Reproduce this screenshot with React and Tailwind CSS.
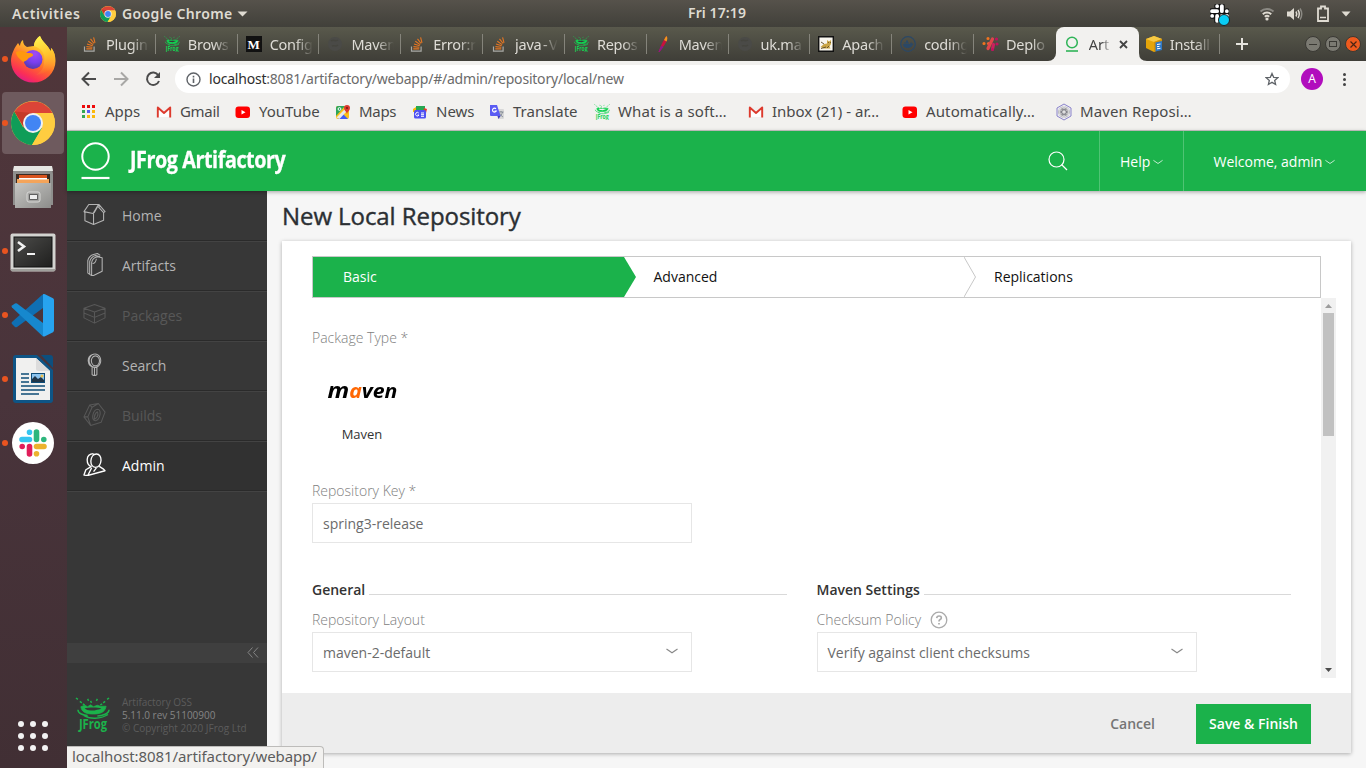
import React from "react";

/* ---------- small icons ---------- */
const StackOverflow = () => (
  <svg width="16" height="16" viewBox="0 0 16 16" fill="none">
    <path d="M2.500 10.500v4.600h9.600v-4.600" stroke="#a9a9a5" strokeWidth="1.200" />
    <path d="M4.300 12.900h6M4.400 10.600l6 .7M5 8l5.700 1.800M6.300 5.200l4.900 3.400M8.500 2.800l3.600 4.700M11.600 1.300l1.400 5.600" stroke="#e87722" strokeWidth="1.100" />
  </svg>
);
const Frog = ({ w = 16, h = 16, color = "#12d352", gap = "#373737" }) => (
  <svg width={w} height={h} viewBox="0 0 36 36" fill="none" stroke={color}>
    <path d="M1 1l2 1.500m2 2l2 1.500m1 1l2 1M35 1l-2 1.500m-2 2l-2 1.500m-1 1l-2 1M13 2l1 2M23 2l-1 2M16 4l1 2" strokeWidth="1.500" />
    <path d="M6 10l4-1.500 3 1.500 3-2 3 2 4-1.500 3 1 6 0c-1 5-4 8-13 8S7 15 6 10z" fill={color} strokeWidth=".8" />
    <path d="M10 11.500c3-1 14-1 17 0-1 1.500-4 1-6 2s-5 0-7 0-3-1-4-2z" fill={gap} stroke="none" />
    <path d="M3 13c0 4 6 6 10 6M35 13c0 4-7 6.500-12 6.500M9 19c6 4 17 4 25-1" strokeWidth="1.500" />
    <text x="4" y="33" fontSize="15" fontWeight="700" stroke="none" fill={color} textLength="29" lengthAdjust="spacingAndGlyphs" fontFamily="Open Sans, sans-serif">JFrog</text>
  </svg>
);
const Medium = () => (
  <span className="flex h-4 w-4 items-center justify-center bg-[#111] font-['Liberation_Serif',serif] text-[13px] leading-none font-bold text-white">M</span>
);
const Globe = () => (
  <svg width="16" height="16" viewBox="0 0 16 16"><circle cx="8" cy="8" r="7" fill="#4a4a47" /><path d="M4 5c3-2 4 1 7-1M5 10c3-1 4 1 6-1" stroke="#45453f" strokeWidth="1.500" fill="none" /></svg>
);
const Feather = () => (
  <svg width="16" height="16" viewBox="0 0 16 16"><path d="M11.500 0c1.500 2 .5 5-2 9l-3 4-2 3H3.500l2-5c1.500-4 3.500-8 6-11z" fill="#c8123c" /><path d="M11.500 0c1.200 1.500 1 3.500 0 5.500L9 4c.8-1.500 1.500-3 2.500-4z" fill="#f0961c" /><path d="M6 9.500l2.500 1.500-2 2.500-2 2.500h-1z" fill="#8b1a86" /></svg>
);
const Tomcat = () => (
  <svg width="16" height="16" viewBox="0 0 16 16"><path d="M.7.700h14.600v14.600H.7z" fill="#f8f6ee" stroke="#111" strokeWidth="1.400" /><path d="M2.500 11l3.500-3 3-.5V4l2 1.500L13 4v4l-1.500 2.500 1 2H6z" fill="#c9a545" /><path d="M3 6l3 2M3 12.500l5-1.500M10 6.500h.8M12 6.500h.8M9 12l2-2" stroke="#5b4a22" strokeWidth=".9" /></svg>
);
const DockerIcon = () => (
  <svg width="16" height="16" viewBox="0 0 16 16"><circle cx="8" cy="8" r="7.300" fill="none" stroke="#2b4866" strokeWidth="1.200" /><path d="M3 8h7l1-2 1 1.500 1.500.2C12 11 10 12 7.500 12S3.500 11 3 8zM4 6.500h5v1H4zM6 4.500h2v2H6z" fill="#2b4866" /></svg>
);
const Dots = () => (
  <svg width="17" height="16" viewBox="0 0 17 16" strokeLinecap="round" strokeWidth="3.200" fill="none"><path d="M2 7.500h0M6 2.500h0" stroke="#f2731f" /><path d="M6.500 7.500h0" stroke="#ee6432" /><path d="M10.500 3L6 12.500" stroke="#e0454a" /><path d="M11.500 8.500L10.500 13" stroke="#c9225e" /><path d="M14.500 3h0M15 8h0M10.500 13.500h0" stroke="#c0115e" /></svg>
);
const Ring = () => (
  <svg width="14" height="16" viewBox="0 0 14 16" fill="none" stroke="#2fb457"><circle cx="7" cy="6.500" r="5.300" strokeWidth="1.500" /><path d="M1 15h12" strokeWidth="1.600" /></svg>
);
const Box = () => (
  <svg width="17" height="16" viewBox="0 0 17 16"><path d="M8 0l8 3v9l-8 4-8-4V3z" fill="#e5a50a" /><path d="M0 3l8 3 8-3-8-3z" fill="#f6c944" /><path d="M8 6v10l8-4V3z" fill="#d69207" /><path d="M9.500 6.500l6.500-1.500v9l-6.500 1.500z" fill="#2f78c4" /><path d="M11 8.500l3.500-.5M11 10.700l2.500-.3M11 12.800l3.500-.5" stroke="#fff" /></svg>
);
const GmailIcon = () => (
  <svg width="16" height="16" viewBox="0 0 16 16"><path d="M1.500 3h13v10.500h-13z" fill="#f1efee" /><path d="M3 13V4.500l5 4.500 5-4.500V13" fill="#fdfdfd" /><path d="M1.800 13.500V3.500L8 9l6.200-5.500v10" fill="none" stroke="#dd3a2d" strokeWidth="1.900" strokeLinejoin="round" /></svg>
);
const YouTube = () => (
  <svg width="16" height="16" viewBox="0 0 16 16"><rect x=".5" y="2.500" width="14.500" height="11.500" rx="3" fill="#f00" /><path d="M6.500 6v4.500l4-2.200z" fill="#fff" /></svg>
);
const MapsIcon = () => (
  <svg width="16" height="16" viewBox="0 0 16 16"><rect x="1" y="2" width="13" height="13" rx="2" fill="#fbc117" /><path d="M1 4q0-2 2-2h7L1 12z" fill="#2fa65b" /><path d="M3 15l5-5 5 5z" fill="#3f5cf5" /><path d="M1.500 13.500l9-9 2 2-8 8.500z" fill="#e9e9e9" /><circle cx="4.500" cy="5" r="1.400" fill="none" stroke="#fff" /><path d="M12 1a3 3 0 0 1 3 3c0 2.500-2.500 3.500-3 6-.5-2.500-3-3.500-3-6a3 3 0 0 1 3-3z" fill="#dc3a2e" /><circle cx="12" cy="4" r="1.100" fill="#7e1c14" /></svg>
);
const NewsIcon = () => (
  <svg width="16" height="16" viewBox="0 0 16 16"><path d="M4 2h9v4H4z" fill="#28a852" /><path d="M1 5l3-2v5H1z" fill="#fbbc04" /><path d="M12 4l3 1-1 4h-3z" fill="#e6392d" /><rect x="2" y="6" width="12" height="8.500" rx="1.500" fill="#4f51f3" /><path d="M6.700 9A1.800 1.800 0 1 0 7 11H5.500M9 9h3M9 10.700h3M9 12.300h3" stroke="#fff" fill="none" /></svg>
);
const TranslateIcon = () => (
  <svg width="16" height="16" viewBox="0 0 16 16"><path d="M7 5h7q1 0 1 1v8q0 1-1 1H9z" fill="#d8d8d8" /><path d="M9.500 8h5M12 7v1M10 13c2-1 3-3 3.500-5M10.500 9c1 2 2 3 3.500 4" stroke="#77808c" strokeWidth=".8" fill="none" /><path d="M1 1h7l3.500 11H2q-1 0-1-1z" fill="#5a5cf3" /><path d="M8.500 12h3l-2 3z" fill="#3d3fc0" /><path d="M7 4.800A2 2 0 1 0 7.300 7H5.500" stroke="#fff" fill="none" strokeWidth="1.100" /></svg>
);
const Hex = () => (
  <svg width="18" height="18" viewBox="0 0 18 18" fill="none"><path d="M9 1l7 4v8l-7 4-7-4V5z" stroke="#8a83c9" fill="#ecebf3" /><circle cx="9" cy="9" r="5.800" fill="#a4a4a8" /><path d="M9 3.500l4.700 2.700v5.500L9 14.400l-4.700-2.700V6.200zM9 3.500v11M4.300 6.200l9.400 5.500M13.700 6.200l-9.400 5.500" stroke="#eee" strokeWidth=".8" /><circle cx="9" cy="9" r="2.500" stroke="#6f6f78" strokeWidth=".8" /></svg>
);
const AppsIcon = () => {
  const c = ["#f00a0a", "#e00a0a", "#f00a0a", "#35a853", "#5a5cf3", "#fbb90b", "#35a853", "#fbb90b", "#fbb90b"];
  return (
    <svg width="16" height="16" viewBox="0 0 16 16">
      {c.map((f, i) => <rect key={i} x={2 + (i % 3) * 5} y={1 + Math.floor(i / 3) * 5} width="3" height="3" fill={f} />)}
    </svg>
  );
};
const ChromeLogo = ({ size }) => (
  <svg width={size} height={size} viewBox="0 0 44 44">
    <circle cx="22" cy="22" r="22" fill="#ffcd40" />
    <path d="M22 22L3.500 10.500A22 22 0 0 1 41.400 12z" fill="#db4437" />
    <path d="M3.300 10.500A22 22 0 0 0 21 44L31 27 22 22 12 26z" fill="#0f9d58" />
    <path d="M22 12h19.400A22 22 0 0 1 21 44l10-17z" fill="#ffcd40" />
    <path d="M3.300 10.500L13 27 22 12z" fill="#c53929" />
    <circle cx="22" cy="22" r="10" fill="#f1f1f1" />
    <circle cx="22" cy="22" r="8" fill="#4285f4" />
  </svg>
);
const SlackMark = ({ size, colors, stroke = 0 }) => (
  <svg width={size} height={size} viewBox="0 0 28 28" strokeLinecap="round" fill="none">
    {stroke > 0 && <path d="M3 10.500h7.500M10.500 3.200h0M17.500 3v7.500M24.800 10.500h0M25 17.500h-7.500M17.500 24.800h0M10.500 25v-7.500M3.200 17.500h0" stroke="#111" strokeWidth="8.500" />}
    <path d="M3 10.500h7.500M10.500 3.200h0" stroke={colors[0]} strokeWidth="5.600" />
    <path d="M17.500 3v7.500M24.800 10.500h0" stroke={colors[1]} strokeWidth="5.600" />
    <path d="M25 17.500h-7.500M17.500 24.800h0" stroke={colors[2]} strokeWidth="5.600" />
    <path d="M10.500 25v-7.500M3.200 17.500h0" stroke={colors[3]} strokeWidth="5.600" />
  </svg>
);

/* ---------- dock ---------- */
const Firefox = () => (
  <svg width="46" height="48" viewBox="0 0 46 48">
    <defs>
      <linearGradient id="ff1" x1=".8" y1="0" x2=".3" y2="1"><stop offset="0" stopColor="#fff44f" /><stop offset=".3" stopColor="#ffc02d" /><stop offset=".6" stopColor="#ff6a2b" /><stop offset=".85" stopColor="#fb2f56" /><stop offset="1" stopColor="#e01b8a" /></linearGradient>
      <linearGradient id="ff3" x1=".3" y1="0" x2=".5" y2="1"><stop offset="0" stopColor="#fff44f" /><stop offset=".5" stopColor="#ffc52e" /><stop offset="1" stopColor="#ff8a2b" stopOpacity="0" /></linearGradient>
      <radialGradient id="ff2" cx=".6" cy=".2" r=".9"><stop offset="0" stopColor="#a14bf5" /><stop offset=".5" stopColor="#7a3ff0" /><stop offset="1" stopColor="#4a3a9c" /></radialGradient>
    </defs>
    <path d="M30 1c-3 2-6 6-6 10-3 0-5 1-7 1-2-1-4-3-4-7-2 1-3 4-3 6l-2-3c-3 4-7 11-7 18a22.200 21.500 0 0 0 44.500 0c0-6-2-11-4.500-13 0 2 0 3-.5 3C38 10 32 7 30 1z" fill="url(#ff1)" />
    <path d="M30 1c-3 2-6 6-6 10 7 2 12 8 10 16 0 6-3 10-8 13 12-1 19-9 19-18 0-3-2-7-4-9 0 2 0 3-.5 3C38 10 32 7 30 1z" fill="url(#ff3)" />
    <circle cx="23" cy="24.500" r="9.500" fill="url(#ff2)" />
    <path d="M6 17c4-2 9-1 11 1 3 0 6 0 6 2 0 2-4 2-5 4-2 2-3 2-5 3-3-3-7-6-7-10z" fill="#ff980e" />
  </svg>
);
const Files = () => (
  <svg width="44" height="46" viewBox="0 0 44 46">
    <defs><linearGradient id="fi" x1="0" y1="0" x2="1" y2="1"><stop offset="0" stopColor="#c6c6c3" /><stop offset="1" stopColor="#8d8d8b" /></linearGradient></defs>
    <path d="M3 2h38l1 8v31h-2v3H4v-3H2V8z" fill="#8f8f8d" /><path d="M3 2h38l1 5H2z" fill="#e6e6e3" />
    <path d="M5 10h34v11H5z" fill="#3a2a22" /><path d="M8 11h28v8H8z" fill="#d9541e" /><path d="M6 15h32v5H6z" fill="#f4a45a" /><path d="M8 14h28v1.500H8z" fill="#fff" />
    <path d="M4 19h36v25H4z" fill="url(#fi)" /><rect x="16" y="28" width="13" height="10" rx="2" fill="#a3a3a1" stroke="#d8d8d6" /><path d="M18.500 30.500h8v5h-8z" fill="#eee" stroke="#444" strokeWidth=".8" />
  </svg>
);
const Terminal = () => (
  <svg className="mt-1" width="46" height="40" viewBox="0 0 46 40">
    <defs><linearGradient id="tm" x1="0" y1="0" x2="1" y2="1"><stop offset="0" stopColor="#4c4c4a" /><stop offset="1" stopColor="#1f1f1e" /></linearGradient></defs>
    <rect x=".5" y=".5" width="45" height="38" rx="2" fill="#d3d3d0" /><path d="M1 36h44v2H1z" fill="#a0a09c" /><rect x="4" y="4" width="38" height="30" fill="url(#tm)" stroke="#111" />
    <path d="M8 9l6 4.500L8 18" stroke="#f2f2f2" strokeWidth="2.600" fill="none" /><path d="M17 21h8" stroke="#f2f2f2" strokeWidth="2" />
  </svg>
);
const VSCode = () => (
  <svg width="44" height="44" viewBox="0 0 44 44">
    <path d="M33 1l-1 14L6 34q-1 .6-2 0l-3-3q-1-1 0-2L31 2z" fill="#0f6fb3" />
    <path d="M1 14.500q-1-1 0-2l3-2q1-.6 2 0l28 21-2 12z" fill="#1688ce" />
    <path d="M32 1.200q1-.6 2 0l8 4q1 .6 1 2v30q0 1-1 2l-8 4q-1 .6-2 0z" fill="#27a3ef" />
  </svg>
);
const Writer = () => (
  <svg width="40" height="48" viewBox="0 0 40 48">
    <path d="M3 0h21l16 15v30q0 3-3 3H3q-3 0-3-3V3q0-3 3-3z" fill="#0e5586" /><path d="M28 0h9q3 0 3 3v10z" fill="#0d4f7e" />
    <path d="M3 3h20l14 13v29H3z" fill="#f0f0ef" /><path d="M23 3l14 13H25q-2 0-2-2z" fill="#dcdcdc" />
    <path d="M8 19h8M8 23h8M8 27h8M8 31h24M8 35h24M8 39h18" stroke="#0e4c77" strokeWidth="1.700" /><rect x="18.500" y="18.500" width="13" height="9" fill="#8cc4ef" stroke="#0e4c77" /><path d="M19 27v-3l3-3 3 3 3-2 3 3v2z" fill="#213648" /><circle cx="29" cy="21" r="1.500" fill="#eec14d" />
  </svg>
);

const dock = [
  { icon: <Firefox />, dot: true },
  { icon: <ChromeLogo size={44} />, dot: true, active: true },
  { icon: <Files /> },
  { icon: <Terminal />, dot: true },
  { icon: <VSCode />, dot: true },
  { icon: <Writer />, dot: true },
  { icon: <span className="flex h-[42px] w-[42px] items-center justify-center rounded-full bg-white"><SlackMark size={28} colors={["#36c5f0", "#2eb67d", "#ecb22e", "#e01e5a"]} /></span>, dot: true },
];

function Dock() {
  return (
    <aside className="flex w-[67px] shrink-0 flex-col bg-linear-to-b from-[#50363a] via-[#49343b] to-[#412f34]">
      {dock.map((d, i) => (
        <div key={i} className="flex h-16 items-center">
          <div className={"ml-0.5 flex h-[62px] w-[62px] items-center rounded-[4px] " + (d.active ? "bg-[#6e5a5e]" : "")}>
            <span className={"h-1.5 w-1.5 rounded-full " + (d.dot ? "bg-[#e95420]" : "")} />
            <span className="flex flex-1 justify-center pr-1.5">{d.icon}</span>
          </div>
        </div>
      ))}
      <div className="mt-auto mb-[17px] ml-[18px] grid w-[30px] grid-cols-3 gap-[6px]">
        {Array.from({ length: 9 }, (_, i) => <span key={i} className="h-1.5 w-1.5 rounded-full bg-[#f2f2f2]" />)}
      </div>
    </aside>
  );
}

/* ---------- desktop bar ---------- */
function TopBar() {
  return (
    <header className="flex h-[27px] items-center bg-linear-to-b from-[#56524b] to-[#41403a] text-[14px] font-semibold text-[#dfdbd2]">
      <div className="flex w-[688px] items-center pl-3">
        <span className="w-[68px] tracking-[0.600px]">Activities</span>
        <span className="ml-5"><ChromeLogo size={16} /></span>
        <span className="ml-[6px] w-[112px] whitespace-nowrap tracking-[0.360px]">Google Chrome</span>
        <svg className="ml-[3px]" width="11" height="6" viewBox="0 0 11 6"><path d="M.5.500h10L5.500 5.500z" fill="#dfdbd2" /></svg>
      </div>
      <div className="-mt-0.5 tracking-[0.100px]">Fri 17:19</div>
      <div className="ml-auto flex items-center pr-[15px]">
        <span className="relative mr-[29px] flex h-5 w-5 items-center">
          <SlackMark size={19} stroke={1} colors={["#fff", "#fff", "#fff", "#fff"]} />
          <span className="absolute right-0 bottom-[-2px] h-[12px] w-[12px] rounded-full border border-[#222] bg-[#09cdf5]" />
        </span>
        <svg width="16" height="14" viewBox="0 0 16 14" fill="none" strokeWidth="1.900"><path d="M1.500 4.500a9.500 9.500 0 0 1 13 0" stroke="#8b8983" /><path d="M3.800 7.200a6 6 0 0 1 8.400 0M5.800 9.800a3.200 3.200 0 0 1 4.400 0" stroke="#dfdbd2" /><circle cx="8" cy="12" r="1.600" fill="#dfdbd2" /></svg>
        <svg className="ml-3" width="16" height="14" viewBox="0 0 16 14" fill="none"><path d="M0 4.500h3L7 1v12L3 9.500H0z" fill="#dfdbd2" /><path d="M9 4.500q1.500 2.500 0 5M11 3q2.500 4 0 8" stroke="#dfdbd2" strokeWidth="1.500" /><path d="M13 1.500q3.500 5.500 0 11" stroke="#8b8983" strokeWidth="1.500" /></svg>
        <svg className="ml-[14px]" width="12" height="17" viewBox="0 0 12 17" fill="none"><path d="M1 3.500h3v-2h4v2h3V16H1z" stroke="#dfdbd2" strokeWidth="1.800" /><path d="M3 12.500h6" stroke="#dfdbd2" strokeWidth="1.500" /></svg>
        <svg className="ml-3" width="10" height="6" viewBox="0 0 10 6"><path d="M.5.500h9L5 5.500z" fill="#dfdbd2" /></svg>
      </div>
    </header>
  );
}

/* ---------- browser chrome ---------- */
const tabs = [
  [<StackOverflow />, "Plugin"], [<Frog />, "Brows"], [<Medium />, "Config"], [<Globe />, "Maven"],
  [<StackOverflow />, "Error:r"], [<StackOverflow />, "java - V"], [<Frog />, "Repos"], [<Feather />, "Maven"],
  [<Globe />, "uk.ma"], [<Tomcat />, "Apach"], [<DockerIcon />, "coding"], [<Dots />, "Deplo"],
];

function Tab({ icon, label, last }) {
  return (
    <div className={"flex h-[34px] w-[81.820px] shrink-0 items-center " + (last ? "bg-linear-to-b from-[#59594c] to-[#3f3e38] rounded-br-[8px]" : "")}>
      <span className="ml-2 w-4 shrink-0">{icon}</span>
      <span className="ml-2 w-[43px] overflow-hidden mask-r-from-60% text-[14.500px] leading-[26px] tracking-[-0.250px] whitespace-nowrap text-[#dedcd6] [word-spacing:-2px]">{label}</span>
      {!last && <span className="ml-auto h-5 w-px bg-[#85847b]" />}
    </div>
  );
}

function TabStrip() {
  const btn = "flex h-4 w-4 items-center justify-center rounded-full border border-[#3a3934]";
  return (
    <div className="flex h-[34px] items-center bg-linear-to-b from-[#59594c] to-[#3f3e38] pl-[7px]">
      {tabs.slice(0, 11).map(([icon, label], i) => <Tab key={i} icon={icon} label={label} />)}
      <div className="flex bg-[#f2f1ef]">
        <Tab icon={tabs[11][0]} label={tabs[11][1]} last />
      </div>
      <div className="flex h-[34px] w-[83px] shrink-0 items-center rounded-t-[8px] bg-[#f2f1ef]">
        <span className="ml-[9px]"><Ring /></span>
        <span className="ml-[10px] w-[22px] overflow-hidden mask-r-from-60% text-[14.500px] leading-[26px] text-[#444]">Art</span>
        <svg className="ml-[8px]" width="9" height="9" viewBox="0 0 9 9"><path d="M1 1l7 7M8 1L1 8" stroke="#444" strokeWidth="1.800" /></svg>
      </div>
      <svg className="-mr-[9px] self-end" width="8" height="8" viewBox="0 0 8 8"><path d="M0 0v8h8q-8 0-8-8z" fill="#f2f1ef" /></svg>
      <Tab icon={<Box />} label="Install" />
      <svg className="ml-[15px]" width="14" height="14" viewBox="0 0 14 14"><path d="M7 1v12M1 7h12" stroke="#e6e4de" strokeWidth="2" /></svg>
      <div className="mr-[5px] ml-auto flex gap-1">
        <span className={btn + " bg-[#7b7a72]"}><span className="h-px w-2 bg-[#3a3934]" /></span>
        <span className={btn + " bg-[#7b7a72]"}><span className="h-1.5 w-2 border border-[#3a3934]" /></span>
        <span className={btn + " bg-[#ee5a1e]"}><svg width="7" height="7" viewBox="0 0 7 7"><path d="M.5.500l6 6M6.500.500l-6 6" stroke="#4a2413" strokeWidth="1.200" /></svg></span>
      </div>
    </div>
  );
}

function Toolbar() {
  return (
    <div className="flex h-9 items-center bg-[#f2f1ef] pr-[17px] pl-[14px]">
      <svg width="16" height="16" viewBox="0 0 16 16" fill="none" stroke="#4b4b4b" strokeWidth="2"><path d="M15 8H2M8 1.500L1.500 8 8 14.500" /></svg>
      <svg className="ml-4" width="16" height="16" viewBox="0 0 16 16" fill="none" stroke="#a8a7a5" strokeWidth="2"><path d="M1 8h13M8 1.500L14.500 8 8 14.500" /></svg>
      <svg className="ml-4" width="16" height="16" viewBox="0 0 16 16" fill="none"><path d="M13.300 4.200A6.200 6.200 0 1 0 14 10" stroke="#4b4b4b" strokeWidth="2" /><path d="M15 1v6H9z" fill="#4b4b4b" /></svg>
      <div className="ml-[14px] flex h-7 w-[1115px] items-center rounded-full bg-white pl-[11px] text-[14px] text-[#6b6b6b]">
        <svg width="15" height="15" viewBox="0 0 15 15" fill="none" stroke="#5f6368"><circle cx="7.500" cy="7.500" r="6.500" strokeWidth="1.400" /><path d="M7.500 6.500v4.500M7.500 3.800v1.600" strokeWidth="1.600" /></svg>
        <span className="-mt-0.5 ml-2 tracking-[-0.210px]"><span className="text-[#2e2e2e]">localhost</span>:8081/artifactory/webapp/#/admin/repository/local/new</span>
        <svg className="mr-[11px] ml-auto" width="14" height="14" viewBox="0 0 24 24" fill="none" stroke="#5f6368" strokeWidth="2.200"><path d="M12 2.500l2.900 6.600 7.100.6-5.400 4.700 1.600 7L12 17.700l-6.200 3.700 1.600-7L2 9.700l7.100-.6z" /></svg>
      </div>
      <span className="ml-[11px] flex h-[22px] w-[22px] items-center justify-center rounded-full bg-[#b10dbd] text-[12px] text-white">A</span>
      <span className="ml-auto mr-[3px] flex flex-col gap-0.5">
        {[0, 1, 2].map((i) => <span key={i} className="h-[3px] w-[3px] rounded-full bg-[#444]" />)}
      </span>
    </div>
  );
}

const marks = [
  [<AppsIcon />, "Apps", "w-[76px]"], [<GmailIcon />, "Gmail", "w-[79px]"], [<YouTube />, "YouTube", "w-[100px]"],
  [<MapsIcon />, "Maps", "w-[77px]"], [<NewsIcon />, "News", "w-[77px]"], [<TranslateIcon />, "Translate", "w-[105px]"],
  [<Frog gap="#f2f1ef" />, "What is a soft…", "w-[154px]"], [<GmailIcon />, "Inbox (21) - ar…", "w-[154px]"],
  [<YouTube />, "Automatically…", "w-[153px]"], [<Hex />, "Maven Reposi…", "w-[150px]"],
];

function Bookmarks() {
  return (
    <div className="flex h-[34px] items-center border-b border-[#c9c8c6] bg-[#f2f1ef] pb-[3px] pl-[13px] text-[15px] text-[#494949]">
      {marks.map(([icon, label, w], i) => (
        <span key={i} className={"flex shrink-0 items-center whitespace-nowrap " + w}>
          <span className={i === 0 || i === 9 ? "w-[25px]" : "w-[24px]"}>{icon}</span><span className={"-mt-0.5 " + (i === 1 || i === 3 ? "tracking-[-0.300px]" : i > 5 && i !== 7 ? "tracking-[0.120px]" : "tracking-[0px]")}>{label}</span>
        </span>
      ))}
    </div>
  );
}

/* ---------- web app ---------- */
const nav = [
  { label: "Home", d: "M1 9l5-7.500h10.500l6.500 7.500-1.500 1v8L11 22.500l-9-4V10L1 9l9.500 2L15 3.500M11 11v11.500M15.500 3.500l6 6.500M11.500 10.500l4-7M16.500 1.500l-1.500 2M18 3.500l-1.500 1" },
  { label: "Artifacts", d: "M9 23.500V10q1-5 6-6l5 1v14l-9 4.500zM7 22.500V9q1-5 6-6.500l5 1.500M5 21V8q1-5 6-6.500l4-1 3 2M5 21l4 2.500M10 11q3 0 4-5" },
  { label: "Packages", d: "M1 5.500l11-4 11 4-11 4zM1 5.500v10l11 5.500 11-5.500v-10M12 9.500V21M1 10.500l11 4.500 11-4.500", off: true },
  { label: "Search", d: "M12.500 1a6 7 0 1 1-.1 0M13 3a4.200 5.200 0 1 1-.1 0M9.500 14.500v8q2.500 2 5 0v-8M12 15v8M10 1.500q-5 2-4.500 7t5 6" },
  { label: "Builds", d: "M7 2l9-1.500 7 9-4 10.500-11 3.500-7-9zM7 2l2.500 2.500L16 .5M9.500 4.500L5 14.500l3 9M5 14.500l-4 0M15 6.500c5 0 3 11-2 12-5 0-3-11 2-12M15 9q-4 3-3 8M15 9q2 5-3 8", off: true },
  { label: "Admin", d: "M14 1c7 0 6 14-1 14S7 1 14 1M11 .7C2 1 3 12 9 14.500M8 14.500l-5 3-2 5.500 4 .5 18-5-2-2-4-2.500M9 15.500l-4 8M14 15.500l-3 4", active: true },
];

function Sidebar() {
  return (
    <nav className="flex w-[200px] shrink-0 flex-col bg-[#373737]">
      {nav.map((n) => (
        <div key={n.label} className={"flex h-[50px] items-center border-b border-b-[#2a2a2a] border-t pb-0 pl-4 text-[14px] " + (n.label === "Home" ? "border-t-[#373737] " : "border-t-[#434343] ") + (n.active ? "bg-[#313131] text-white" : n.off ? "text-[#585858]" : "text-[#b4b4b4]")}>
          <svg className="-mt-1" width="23" height="23" viewBox="0 0 24 24" fill="none" stroke="currentColor" strokeWidth={n.active ? "1.400" : "1.100"} strokeLinejoin="round"><path d={n.d} /></svg>
          <span className="-mt-0.5 ml-4">{n.label}</span>
        </div>
      ))}
      <div className="flex-1 border-t border-[#434343]" />
      <div className="flex h-5 items-center justify-end bg-[#3f3f3f] pr-2">
        <svg className="-mt-0.5" width="12" height="11" viewBox="0 0 12 11" fill="none" stroke="#858585"><path d="M5.500.500L1 5.500l4.500 5M11 .5L6.500 5.500l4.500 5" /></svg>
      </div>
      <div className="flex h-[105px] items-start pt-[33px] pl-2 text-[10px] leading-[13px] text-[#5c5c5c]">
        <Frog w={35} h={37} color="#1bb24b" />
        <div className="ml-3 tracking-[-0.020px] whitespace-nowrap">
          <div>Artifactory OSS</div>
          <div className="text-[#858585]">5.11.0 rev 51100900</div>
          <div>© Copyright 2020 JFrog Ltd</div>
        </div>
      </div>
    </nav>
  );
}

const Chevron = ({ className = "", w = 10 }) => (
  <svg className={className} width={w} height="6" viewBox="0 0 12 6" fill="none" stroke="currentColor" strokeWidth="1.100"><path d="M.5 1L6 4.800 11.500 1" /></svg>
);

function AppHeader() {
  return (
    <header className="relative z-10 flex h-[60px] shrink-0 items-center bg-[#1bb24b] text-[14px] text-white shadow-[0_1px_4px_rgba(0,0,0,0.35)]">
      <svg className="ml-[14px]" width="29" height="38" viewBox="0 0 29 38" fill="none" stroke="#fff"><circle cx="14.500" cy="14.500" r="13.200" strokeWidth="2" /><path d="M.5 36h28" strokeWidth="2.200" /></svg>
      <span className="-mt-1 ml-5 w-[160px] origin-left scale-x-[0.858] text-[23px] font-bold tracking-[-0.500px] whitespace-nowrap [-webkit-text-stroke:0.300px_#fff]">JFrog Artifactory</span>
      <svg className="ml-auto" width="20" height="20" viewBox="0 0 20 20" fill="none" stroke="#fff" strokeWidth="1.200"><circle cx="8.500" cy="8.500" r="7.500" /><path d="M13.500 13.500l5.500 5.500" /></svg>
      <div className="ml-[31px] flex h-full w-[84px] items-center border-l border-[#4fc474] pl-[20px]">Help<Chevron className="mt-0.5 ml-[3px] opacity-80" /></div>
      <div className="flex h-full w-[183px] items-center border-l border-[#4fc474] pl-[29.500px] whitespace-nowrap">Welcome, admin<Chevron className="mt-0.5 ml-[3px] opacity-80" /></div>
    </header>
  );
}

const Label = ({ children, className = "" }) => <div className={"flex h-5 items-center text-[14px] font-light text-[#808080] " + className}><span className="-mt-0.5">{children}</span></div>;
const Section = ({ children }) => (
  <div className="flex h-5 items-center text-[14px] font-semibold text-[#333]"><span className="-mt-0.5">{children}</span><span className="mt-[9px] ml-[4px] h-px flex-1 bg-[#d9d9d9]" /></div>
);
const Field = ({ children, select }) => (
  <div className="mt-0.5 flex h-10 w-[380px] items-center justify-between border border-[#e6e6e6] pr-[13px] pl-[10px] text-[14px] text-[#6b6b6b]">
    <span>{children}</span>
    {select && <Chevron w={12} className="-mt-[3px] opacity-80" />}
  </div>
);

function Form() {
  return (
    <div className="mx-[30px] mt-[15px] flex h-[422px] w-[1024px] flex-col">
      <div className="flex h-[42px] w-[1009px] items-center border border-[#c8c8c8] text-[14px] text-[#111]">
        <div className="flex h-10 w-[311px] items-center bg-[#1bb24b] pb-0.5 pl-[30px] text-white">Basic</div>
        <svg width="12" height="40" viewBox="0 0 12 40"><path d="M0 0l12 20L0 40z" fill="#1bb24b" /></svg>
        <div className="w-[328px] pb-0.5 pl-[17.500px]">Advanced</div>
        <svg width="12" height="40" viewBox="0 0 12 40" fill="none" stroke="#c8c8c8"><path d="M0 0l11.500 20L0 40" /></svg>
        <div className="pb-0.5 pl-[18px]">Replications</div>
      </div>
      <div className="flex h-[380px]">
        <div className="w-[1009px] pt-[30px] pr-[30px]">
          <Label>Package Type *</Label>
          <div className="mt-[31px] w-[100px] text-center">
            <div className="ml-px flex h-5 scale-x-[1.090] items-baseline justify-center text-[19.500px] leading-5 font-bold text-black italic">
              <span className="text-[22px]">m</span><span className="text-[#ff6804]">a</span><span>ven</span>
            </div>
            <div className="mt-[25px] h-5 text-[13px] leading-5 text-[#333]">Maven</div>
          </div>
          <Label className="mt-[37px]">Repository Key *</Label>
          <Field>spring3-release</Field>
          <div className="mt-[37px] grid grid-cols-2 gap-[30px]">
            <div>
              <Section>General</Section>
              <Label className="mt-[10px]">Repository Layout</Label>
              <Field select>maven-2-default</Field>
            </div>
            <div>
              <Section>Maven Settings</Section>
              <div className="mt-[10px] flex items-center">
                <Label>Checksum Policy</Label>
                <svg className="ml-[9px]" width="18" height="18" viewBox="0 0 18 18" fill="none" stroke="#aaa"><circle cx="9" cy="9" r="7.800" strokeWidth="1.300" /><path d="M6.700 7.200q.2-2.200 2.400-2.200t2.200 1.900q0 1-1.200 1.700T9 10.500M9 12v1.500" strokeWidth="1.700" /></svg>
              </div>
              <Field select>Verify against client checksums</Field>
            </div>
          </div>
        </div>
        <div className="flex w-[15px] flex-col items-center justify-between bg-[#f1f1f1] py-[6px]">
          <svg width="7" height="4" viewBox="0 0 7 4"><path d="M0 4h7L3.500 0z" fill="#9d9d9d" /></svg>
          <div className="mt-[5px] mb-auto h-[123px] w-[11px] bg-[#c1c1c1]" />
          <svg width="7" height="4" viewBox="0 0 7 4"><path d="M0 0h7L3.500 4z" fill="#4c4c4c" /></svg>
        </div>
      </div>
    </div>
  );
}

export default function App() {
  return (
    <div className="relative flex h-screen w-[1366px] flex-col overflow-hidden font-['Noto_Sans',sans-serif]">
      <TopBar />
      <div className="flex min-h-0 flex-1">
        <Dock />
        <div className="flex min-w-0 flex-1 flex-col">
          <TabStrip />
          <Toolbar />
          <Bookmarks />
          <div className="flex min-h-0 flex-1 flex-col font-['Open_Sans',sans-serif]">
            <AppHeader />
            <div className="flex min-h-0 flex-1">
              <Sidebar />
              <main className="flex-1 bg-[#f6f6f6] pl-[15px]">
                <h1 className="h-[50px] pt-[9px] text-[24px] leading-8 font-medium tracking-[-0.070px] text-[#2b2f33] [-webkit-text-stroke:0.400px_#2b2f33]">New Local Repository</h1>
                <section className="flex h-[512px] w-[1069px] flex-col bg-white shadow-[0_1px_4px_rgba(0,0,0,0.3)]">
                  <Form />
                  <footer className="mt-auto flex h-[60px] items-center justify-end bg-[#ededed] pt-px pr-10 text-[14px] font-semibold">
                    <span className="mr-[41px] -mt-px text-[#757575]">Cancel</span>
                    <button className="h-10 w-[115px] bg-[#1bb24b] text-white">Save &amp; Finish</button>
                  </footer>
                </section>
              </main>
            </div>
          </div>
        </div>
      </div>
      <div className="absolute bottom-0 left-[67px] z-20 h-[22px] w-[257px] rounded-tr-[4px] border-t border-r border-[#bdbcba] bg-[#f2f1ef] pl-[5px] text-[15px] leading-[19px] tracking-[-0.090px] text-[#5c5c5c]">localhost:8081/artifactory/webapp/</div>
    </div>
  );
}
